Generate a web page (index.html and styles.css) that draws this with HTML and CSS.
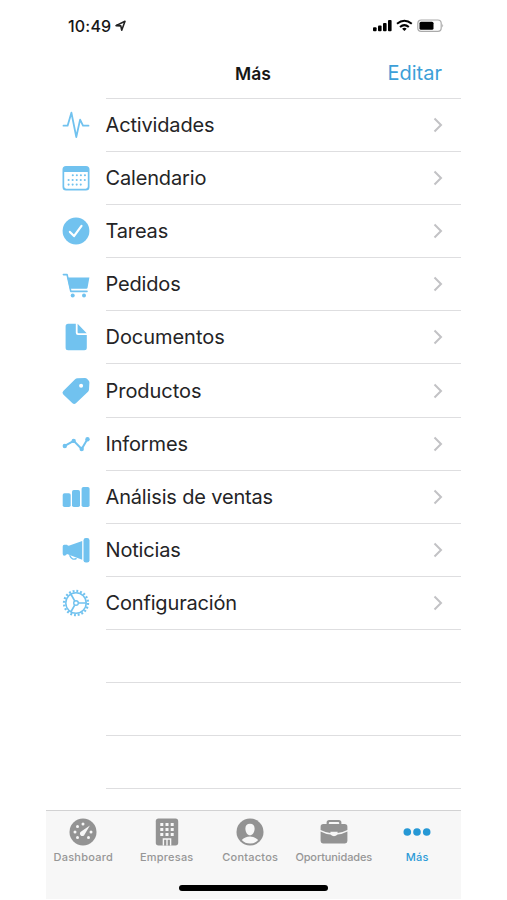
FILE: index.html
```html
<!DOCTYPE html>
<html lang="es">
<head>
<meta charset="utf-8">
<title>Más</title>
<link rel="stylesheet" href="styles.css">
</head>
<body>
<div class="phone">
  <header class="status">
    <span class="time">10:49</span>
    <svg class="location" width="12" height="12" viewBox="0 0 12 12"><path d="M1 5.6 10 1.3 6.7 10.2 5.8 5.9Z" fill="none" stroke="#222" stroke-width="1.6" stroke-linejoin="round"/></svg>
    <svg class="indicators" width="72" height="14" viewBox="0 0 72 14">
      <g fill="#000"><rect x="1" y="8.3" width="3.6" height="3.9" rx="1"/><rect x="6" y="6.4" width="3.6" height="5.8" rx="1"/><rect x="11" y="3.9" width="3.6" height="8.3" rx="1"/><rect x="16" y="1" width="3.6" height="11.2" rx="1"/></g>
      <g fill="none" stroke="#000" stroke-width="2"><path d="M25 4.8Q32.4-1.3 39.8 4.8"/><path d="M28 8Q32.4 4.2 36.8 8"/></g>
      <path d="M30.1 9.7Q32.4 7.9 34.7 9.7L32.4 12.1Z"/>
      <rect x="45.8" y="1" width="23.4" height="11.4" rx="3.4" fill="none" stroke="#aaa" stroke-width="1.2"/><rect x="47.5" y="2.8" width="14" height="7.9" rx="1.5"/><path d="M70.4 4.8Q72 6.7 70.4 8.6Z" fill="#999"/>
    </svg>
  </header>
  <nav class="titlebar"><h1>Más</h1><a class="edit">Editar</a></nav>
  <main class="list">
    <div class="row"><svg class="icon" viewBox="-15 -15 30 30"><path class="line" d="M-12.5 .7H-8.4L-4.6-12.3.3 12 4.1-5.4 7 .7H12.5"/></svg><div class="cell"><span>Actividades</span><svg class="chevron" viewBox="0 0 10 16"><path d="M1.5 1.5 8 8 1.5 14.5"/></svg></div></div>
    <div class="row"><svg class="icon" viewBox="-15 -15 30 30"><path fill-rule="evenodd" d="M-10-12H10Q13.5-12 13.5-8.5V9Q13.5 12.5 10 12.5H-10Q-13.5 12.5-13.5 9V-8.5Q-13.5-12-10-12ZM-11.8-6V8.6Q-11.8 10.7-9.7 10.7H9.7Q11.8 10.7 11.8 8.6V-6Z"/><path class="dots" d="M-3.2-2.7H9M-7.4 2H9M-7.4 6.6H5"/></svg><div class="cell"><span>Calendario</span><svg class="chevron" viewBox="0 0 10 16"><path d="M1.5 1.5 8 8 1.5 14.5"/></svg></div></div>
    <div class="row"><svg class="icon" viewBox="-15 -15 30 30"><circle r="13.4"/><path d="M-6.1.9-2 5.1 5.5-5.2" fill="none" stroke="#fff" stroke-width="2.2" stroke-linecap="round" stroke-linejoin="round"/></svg><div class="cell"><span>Tareas</span><svg class="chevron" viewBox="0 0 10 16"><path d="M1.5 1.5 8 8 1.5 14.5"/></svg></div></div>
    <div class="row"><svg class="icon" viewBox="-15 -15 30 30"><path d="M-8.7-6.5H13.4L11.6 3.5Q11.4 4.7 10.2 4.7H-6.2Z"/><path d="M-12.6-9.4H-8.9L-5.2 7.4H11" fill="none" stroke="#71c2ef" stroke-width="1.6" stroke-linejoin="round" stroke-linecap="round"/><circle cx="-3.3" cy="11.6" r="2"/><circle cx="8" cy="11.6" r="2"/></svg><div class="cell"><span>Pedidos</span><svg class="chevron" viewBox="0 0 10 16"><path d="M1.5 1.5 8 8 1.5 14.5"/></svg></div></div>
    <div class="row"><svg class="icon" viewBox="-15 -15 30 30"><path d="M-7.9-13.3H-.2V-4.2Q-.2-2 2-2H10.8V10.8Q10.8 13.3 8.3 13.3H-7.9Q-10.4 13.3-10.4 10.8V-10.8Q-10.4-13.3-7.9-13.3ZM1.6-13.2 10.7-3.7H2.6Q1.6-3.7 1.6-4.7Z"/></svg><div class="cell"><span class="wide">Documentos</span><svg class="chevron" viewBox="0 0 10 16"><path d="M1.5 1.5 8 8 1.5 14.5"/></svg></div></div>
    <div class="row"><svg class="icon" viewBox="-15 -15 30 30"><path fill-rule="evenodd" d="M1.5-12.8 9-13.1Q10.2-13.1 11-12.3L12.6-10.6Q13.4-9.8 13.4-8.6L13-1.4Q12.9-.1 12 .8L-.1 12.3Q-1.8 13.9-3.5 12.3L-12.7 3.4Q-14.4 1.7-12.7 0L-.9-11.8Q0-12.7 1.5-12.8ZM7.1-5.3A2 2 0 1 0 3.1-5.3 2 2 0 1 0 7.1-5.3Z"/></svg><div class="cell"><span class="wide">Productos</span><svg class="chevron" viewBox="0 0 10 16"><path d="M1.5 1.5 8 8 1.5 14.5"/></svg></div></div>
    <div class="row"><svg class="icon" viewBox="-15 -15 30 30"><path class="line trend" d="M-11.2 1.9-2.3-3.1 5.7 5 11.5-5"/><circle cx="-11.2" cy="2" r="2.2"/><circle cx="-2.3" cy="-3.1" r="2.2"/><circle cx="5.7" cy="5" r="2.2"/><circle cx="11.5" cy="-4.8" r="2.2"/></svg><div class="cell"><span>Informes</span><svg class="chevron" viewBox="0 0 10 16"><path d="M1.5 1.5 8 8 1.5 14.5"/></svg></div></div>
    <div class="row"><svg class="icon" viewBox="-15 -15 30 30"><rect x="-13.3" y="-3.8" width="8" height="13.8" rx="1.8"/><rect x="-4" y="-7" width="8" height="17" rx="1.8"/><rect x="5.6" y="-10" width="8" height="20" rx="1.8"/></svg><div class="cell"><span>Análisis de ventas</span><svg class="chevron" viewBox="0 0 10 16"><path d="M1.5 1.5 8 8 1.5 14.5"/></svg></div></div>
    <div class="row"><svg class="icon" viewBox="-15 -15 30 30"><path d="M-11.8-5.3H-9Q-8-3.9-6.5-4.4L6.2-9V9.8L-9 4.1Q-10 5.8-11.8 5.8-13.3 5.8-13.3 3.8V-3.4Q-13.3-5.3-11.8-5.3Z"/><path d="M-6.4 5.3Q-4 10.8 .6 8.3" fill="none" stroke="#71c2ef" stroke-width="1.4"/><rect x="7.5" y="-12" width="6" height="24.6" rx="2.4"/></svg><div class="cell"><span>Noticias</span><svg class="chevron" viewBox="0 0 10 16"><path d="M1.5 1.5 8 8 1.5 14.5"/></svg></div></div>
    <div class="row"><svg class="icon" viewBox="-15 -15 30 30"><g fill="none" stroke="#71c2ef"><circle r="10.2" stroke-width="1.5"/><circle r="12" stroke-width="2.3" stroke-dasharray="1.9 1.87"/><circle r="2.3" stroke-width="1.4"/><path stroke-width="1.7" d="M2.5 0H10M-1.3-2.2-5.2-9M-1.3 2.2-5.2 9"/></g></svg><div class="cell"><span>Configuración</span><svg class="chevron" viewBox="0 0 10 16"><path d="M1.5 1.5 8 8 1.5 14.5"/></svg></div></div>
    <div class="row"><div class="cell empty"></div></div>
    <div class="row"><div class="cell empty"></div></div>
    <div class="row"><div class="cell empty"></div></div>
  </main>
  <footer class="tabbar">
    <div class="tabs">
      <div class="tab"><svg viewBox="-15 -15 30 30"><circle r="13.5"/><g fill="#f7f7f7"><circle cx="-8" cy="0" r="1.5"/><circle cx="-5.5" cy="-5.4" r="1.5"/><circle cx="0" cy="-8" r="1.5"/><circle cx="8" cy="0" r="1.5"/><circle cx="5.5" cy="5.5" r="1.5"/><circle cx="-5.5" cy="5.5" r="1.5"/><path d="M-2.2-.2 6.9-6.5 1.6 2.4A2.4 2.4 0 1 1-2.2-.2Z"/></g></svg><span>Dashboard</span></div>
      <div class="tab"><svg viewBox="-15 -15 30 30"><path d="M-8.5-13.4H8.5Q11.2-13.4 11.2-10.7V10.8Q11.2 13.4 8.5 13.4H-8.5Q-11.2 13.4-11.2 10.8V-10.7Q-11.2-13.4-8.5-13.4Z"/><g fill="#f7f7f7"><path d="M-6.7-9h3v3h-3zM-1.5-9h3v3h-3zM3.7-9h3v3h-3zM-6.7-4h3v3h-3zM-1.5-4h3v3h-3zM3.7-4h3v3h-3zM-6.7 1h3v3h-3zM-1.5 1h3v3h-3zM3.7 1h3v3h-3zM-4.3 6.3H4.3V13.5H-4.3Z"/></g><path d="M-2.9 7.7H-.7V13.4H-2.9ZM.7 7.7H2.9V13.4H.7Z"/></svg><span>Empresas</span></div>
      <div class="tab"><svg viewBox="-15 -15 30 30"><circle r="13.5"/><path fill="#f7f7f7" d="M0-8.2C-3.2-8.2-4.8-6-4.6-3.1-4.4.4-2.5 3.2 0 3.2S4.4.4 4.6-3.1C4.8-6 3.2-8.2 0-8.2ZM-8.2 8Q-5 4.5 0 4.5T8.2 8Q5 11.6 0 11.6T-8.2 8Z"/></svg><span>Contactos</span></div>
      <div class="tab"><svg viewBox="-15 -15 30 30"><path fill-rule="evenodd" d="M-7.4-8V-9.4Q-7.4-12-4.8-12H4.8Q7.4-12 7.4-9.4V-8H10.7Q13.4-8 13.4-5.3V-2Q8 .7 3.6 1V-.2H-3.6V1Q-8 .7-13.4-2V-5.3Q-13.4-8-10.7-8ZM-5.2-8H5.2V-9Q5.2-10 4.2-10H-4.2Q-5.2-10-5.2-9Z"/><path d="M-13.4-.5Q-8 2.3-3.6 2.5 0 5.8 3.6 2.5 8 2.3 13.4-.5V9Q13.4 11.4 11 11.4H-11Q-13.4 11.4-13.4 9Z"/></svg><span class="narrow">Oportunidades</span></div>
      <div class="tab active"><svg viewBox="-15 -15 30 30"><circle cx="-9.7" r="3.8"/><circle cx="0" r="3.8"/><circle cx="9.7" r="3.8"/></svg><span>Más</span></div>
    </div>
    <div class="home"></div>
  </footer>
</div>
</body>
</html>
```
FILE: styles.css
```css
* { box-sizing: border-box; }
body { margin: 0; background: #fff; font-family: Inter, "Liberation Sans", sans-serif; color: #242426; }
svg { display: block; flex: none; }
.phone { width: 415px; height: 899px; margin-left: 45.5px; display: flex; flex-direction: column; }
.status { height: 50px; display: flex; align-items: center; padding: 1px 17px 0 22.5px; }
.time { font-size: 16px; line-height: 20px; font-weight: 500; width: 45px; letter-spacing: .2px; color: #161616; white-space: nowrap; }
.location { margin-left: 2px; }
.indicators { margin-left: auto; }
.titlebar { height: 48px; display: grid; grid-template-columns: 1fr auto 1fr; align-items: center; padding: 0 18.5px 2px; }
.titlebar h1 { grid-column: 2; margin: 0; font-size: 17.5px; font-weight: 600; color: #161616; }
.edit { justify-self: end; font-size: 20px; color: #3c9fd8; }
.list { flex: 1; margin-left: 60px; border-top: 1.5px solid #dedee0; min-height: 0; }
.row { height: 53.1px; display: flex; align-items: center; margin-left: -45px; }
.icon { width: 30px; height: 30px; fill: #71c2ef; margin-top: -1px; }
.line { fill: none; stroke: #71c2ef; stroke-width: 1.8; stroke-linejoin: round; stroke-linecap: round; }
.trend { stroke-width: 2; }
.dots { fill: none; stroke: #71c2ef; stroke-width: 2.1; stroke-linecap: round; stroke-dasharray: 0 4.05; }
.cell { flex: 1; height: 100%; margin-left: 15px; padding-right: 18px; border-bottom: 1.5px solid #dedee0; display: flex; align-items: center; justify-content: space-between; font-size: 20px; letter-spacing: -.16px; white-space: nowrap; }
.wide { letter-spacing: -.04px; }
.empty { margin-left: 45px; }
.chevron { width: 10px; height: 16px; fill: none; stroke: #c2c2c5; stroke-width: 2; }
.tabbar { height: 89px; background: #f7f7f7; border-top: 1.5px solid #d2d2d3; }
.tabs { display: grid; grid-template-columns: repeat(5, 83.5px); margin-left: -4px; padding-top: 5.5px; }
.tab { display: flex; flex-direction: column; align-items: center; font-size: 11px; line-height: 14px; gap: 3px; font-weight: 500; letter-spacing: .22px; color: #969696; fill: #939393; white-space: nowrap; }
.narrow { letter-spacing: -.12px; }
.tab svg { width: 30px; height: 30px; }
.active { color: #2d9bd8; fill: #2698d5; }
.home { width: 149px; height: 5.5px; border-radius: 3px; background: #000; margin: 21.5px 0 0 133px; }
```
